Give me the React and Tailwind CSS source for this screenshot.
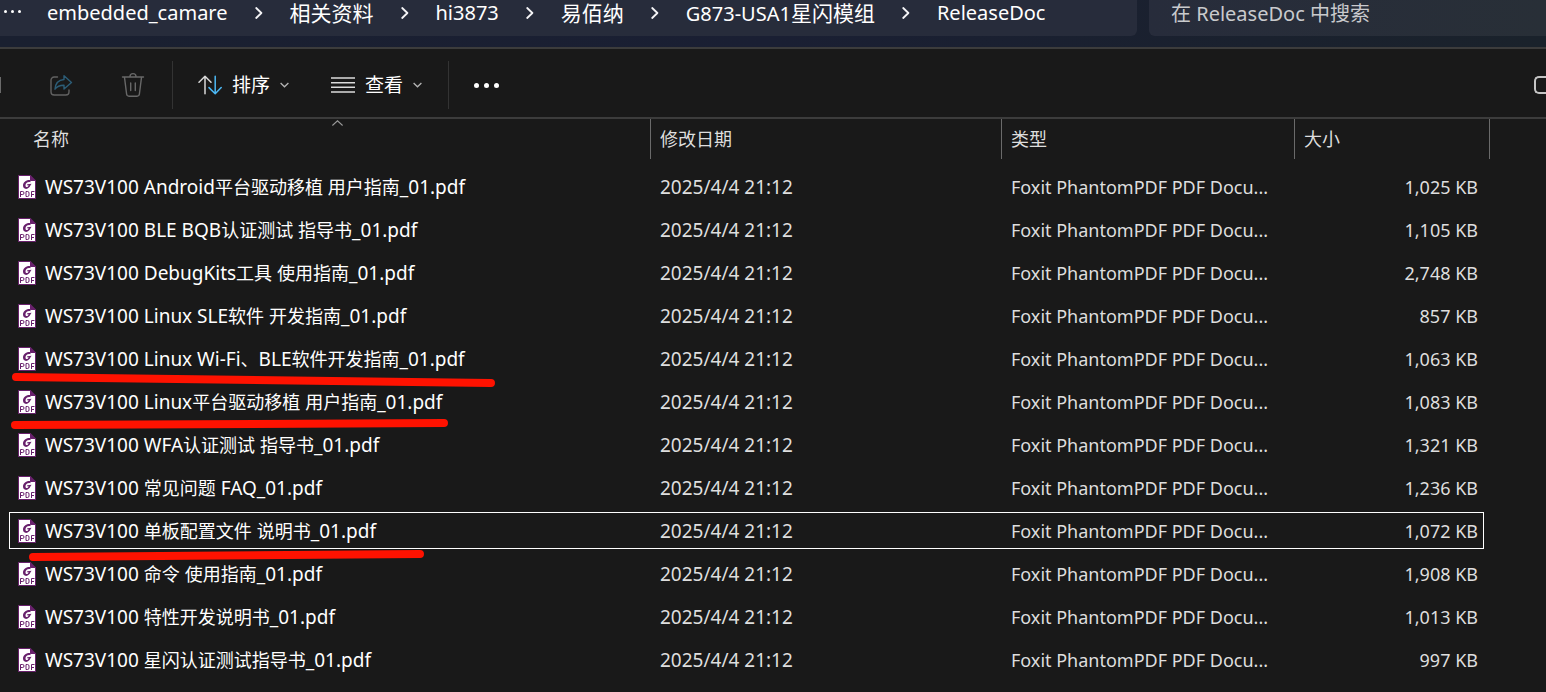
import React from 'react';

const crumbs = ['embedded_camare', '相关资料', 'hi3873', '易佰纳', 'G873-USA1星闪模组', 'ReleaseDoc'];

const files = [
  { name: 'WS73V100 Android平台驱动移植 用户指南_01.pdf', size: '1,025 KB' },
  { name: 'WS73V100 BLE BQB认证测试 指导书_01.pdf', size: '1,105 KB' },
  { name: 'WS73V100 DebugKits工具 使用指南_01.pdf', size: '2,748 KB' },
  { name: 'WS73V100 Linux SLE软件 开发指南_01.pdf', size: '857 KB' },
  { name: 'WS73V100 Linux Wi-Fi、BLE软件开发指南_01.pdf', size: '1,063 KB', mark: { x1: 16, y1: 40, x2: 491, y2: 46 } },
  { name: 'WS73V100 Linux平台驱动移植 用户指南_01.pdf', size: '1,083 KB', mark: { x1: 15, y1: 45, x2: 444, y2: 43 } },
  { name: 'WS73V100 WFA认证测试 指导书_01.pdf', size: '1,321 KB' },
  { name: 'WS73V100 常见问题 FAQ_01.pdf', size: '1,236 KB' },
  { name: 'WS73V100 单板配置文件 说明书_01.pdf', size: '1,072 KB', focused: true, mark: { x1: 33, y1: 48, x2: 420, y2: 45 } },
  { name: 'WS73V100 命令 使用指南_01.pdf', size: '1,908 KB' },
  { name: 'WS73V100 特性开发说明书_01.pdf', size: '1,013 KB' },
  { name: 'WS73V100 星闪认证测试指导书_01.pdf', size: '997 KB' },
];

function CrumbChevron() {
  return (
    <svg width="8" height="12" viewBox="0 0 8 12" fill="none" stroke="#f4f4f6" strokeWidth="1.8" strokeLinecap="round" strokeLinejoin="round" aria-hidden="true">
      <path d="M1.2 1 6.4 6 1.2 11" />
    </svg>
  );
}

function DownChevron() {
  return (
    <svg width="9" height="6" viewBox="0 0 9 6" fill="none" stroke="#b4b4b4" strokeWidth="1.3" aria-hidden="true">
      <path d="M.6 1 4.5 4.8 8.4 1" />
    </svg>
  );
}

function ShareIcon() {
  return (
    <svg width="24" height="24" viewBox="0 0 24 24" fill="none" strokeWidth="1.4" strokeLinejoin="round" strokeLinecap="round" aria-hidden="true">
      <path stroke="#626262" d="M8.5 4H5.2A3.2 3.2 0 0 0 2 7.2V18.8A3.2 3.2 0 0 0 5.2 22H16.8A3.2 3.2 0 0 0 20 18.8V17" />
      <path stroke="#2c5d77" d="M15 2.8 22.5 9.5 15 16V12.3C11 12.2 8.2 13.3 6 16.2 6.4 10.3 9.5 7 15 6.5Z" />
    </svg>
  );
}

function TrashIcon() {
  return (
    <svg width="24" height="26" viewBox="0 0 24 26" fill="none" stroke="#686868" strokeWidth="1.4" strokeLinecap="round" strokeLinejoin="round" aria-hidden="true">
      <path d="M1.5 5H22.5M9 4.6A3 3 0 0 1 15 4.6M3.5 5.4 5.6 22A2.5 2.5 0 0 0 8 24.2H16A2.5 2.5 0 0 0 18.4 22L20.5 5.4M9.7 11V18.5M14.3 11V18.5" />
    </svg>
  );
}

function SortIcon() {
  return (
    <svg width="24" height="20" viewBox="0 0 24 20" fill="none" strokeWidth="1.5" strokeLinecap="round" strokeLinejoin="round" aria-hidden="true">
      <path stroke="#d8d8d8" d="M1 7.2 7 1.2 13 7.2M7 1.5V18.8" />
      <path stroke="#4cb8f4" d="M11 12.6 17.2 18.8 23.2 12.6M17.2 1.2V18.5" />
    </svg>
  );
}

function ListIcon() {
  return (
    <svg width="24" height="16" viewBox="0 0 24 16" fill="none" stroke="#dcdcdc" strokeWidth="1.5" aria-hidden="true">
      <path d="M0 1H24M0 5.7H24M0 10.3H24M0 15H24" />
    </svg>
  );
}

function PdfIcon() {
  return (
    <svg className="shrink-0" width="18" height="24" viewBox="0 0 18 24" aria-hidden="true">
      <path d="M.5 .5H12.5V5.5H17.5V23.5H.5Z" fill="#fff" stroke="#68216c" />
      <path d="M12.5 0 18 5.5H12.5Z" fill="#68216c" />
      <path d="M12.6 5.2C8.2 4.6 5 7.4 5 10.6 5 14 8.6 15 11 12.6 12.2 11.4 12.4 10.4 13.6 8.8L9.4 9.2 8.8 10.3 10.6 10.2C10 12.6 7.4 12.8 7.5 10.2 7.6 8.2 9.4 6.6 12.4 7.2Z" fill="#68216c" />
      <path d="M2.5 22V16.5H4.7Q6 16.500 6 18T4.700 19.500H2.500M8 21.500V16.500H9.500Q11 16.500 11 18V20Q11 21.500 9.500 21.500H8M13.500 22V16.500H16.500M13.500 19.500H16" fill="none" stroke="#68216c" />
    </svg>
  );
}

function Mark({ x1, y1, x2, y2 }) {
  return (
    <svg className="pointer-events-none absolute top-0 left-0 z-10 overflow-visible" width="500" height="52" aria-hidden="true">
      <line x1={x1} y1={y1} x2={x2} y2={y2} stroke="#ff1200" strokeWidth="8" strokeLinecap="round" />
    </svg>
  );
}

function HeaderCell({ children, first }) {
  return (
    <th scope="col" className="p-0 text-left align-top font-normal">
      <div className={first ? 'h-10 border-r border-[#6a6a6a] pl-[33px] leading-10' : 'h-10 border-r border-[#6a6a6a] pl-[9px] leading-10'}>
        {children}
      </div>
    </th>
  );
}

function Mixed({ text, han }) {
  return text.split(/([\u3001\u4e00-\u9fff]+)/).map((part, i) =>
    i % 2 ? <span key={i} className={han}>{part}</span> : part
  );
}

export default function App() {
  return (
    <div className="min-h-screen overflow-hidden bg-[#191919] font-['Noto_Sans','Noto_Sans_CJK_SC',sans-serif] text-[18px] text-white">
      <header className="flex items-start gap-3 border-b-2 border-[#3c3c3c] bg-linear-to-r from-[#1a2030] via-[#1a1f33] to-[#1a222b] pb-[11px]">
        <nav aria-label="路径" className="flex h-9 flex-1 items-center rounded-br-md bg-[#272c3b] pb-[10px] text-[20px] leading-[26px] whitespace-nowrap">
          <button type="button" aria-label="更多路径" className="mb-1 ml-1 flex w-[18px] gap-1">
            <span className="size-[3px] rounded-full bg-white" />
            <span className="size-[3px] rounded-full bg-white" />
            <span className="size-[3px] rounded-full bg-white" />
          </button>
          <ol className="ml-[25px] flex items-center">
            {crumbs.map((c, i) => (
              <li key={c} className="flex items-center">
                {i > 0 && <span className="mx-[27px]"><CrumbChevron /></span>}
                <a href="#"><Mixed text={c} han="text-[21px]" /></a>
              </li>
            ))}
          </ol>
        </nav>
        <input
          type="search"
          aria-label="搜索"
          placeholder="在 ReleaseDoc 中搜索"
          className="h-9 w-[397px] shrink-0 rounded-bl-md bg-linear-to-r from-[#272c3b] to-[#282f37] pb-[10px] pl-[22px] text-[20px] leading-[26px] outline-none placeholder:text-[#c9cacd]"
        />
      </header>

      <div role="toolbar" aria-label="命令" className="flex h-[70px] items-center border-b-2 border-[#3c3c3c] pt-1 text-[19px]">
        <span className="h-4 w-px bg-[#6a6a6a]" />
        <button type="button" aria-label="共享" disabled className="ml-12"><ShareIcon /></button>
        <button type="button" aria-label="删除" disabled className="ml-12"><TrashIcon /></button>
        <span className="ml-[27px] h-12 w-px bg-[#333333]" />
        <button type="button" className="ml-[25px] flex items-center gap-[10px]">
          <SortIcon />
          <span>排序</span>
          <DownChevron />
        </button>
        <button type="button" className="ml-[42px] flex items-center gap-[10px]">
          <ListIcon />
          <span>查看</span>
          <DownChevron />
        </button>
        <span className="ml-[26px] h-12 w-px bg-[#333333]" />
        <button type="button" aria-label="查看更多" className="ml-[25px] flex gap-[5px]">
          <span className="size-[5px] rounded-full bg-white" />
          <span className="size-[5px] rounded-full bg-white" />
          <span className="size-[5px] rounded-full bg-white" />
        </button>
        <button type="button" aria-label="详细信息" className="ml-auto h-[18px] w-3 rounded-l-[5px] border-2 border-r-0 border-[#c4c4c4]" />
      </div>

      <table className="w-full table-fixed border-collapse whitespace-nowrap">
        <colgroup>
          <col className="w-[651px]" />
          <col className="w-[351px]" />
          <col className="w-[293px]" />
          <col className="w-[195px]" />
          <col />
        </colgroup>
        <thead>
          <tr className="relative h-[46px] text-[#dedede]">
            <HeaderCell first>
              名称
              <svg className="absolute top-[1px] left-[332px]" width="11" height="6" viewBox="0 0 11 6" fill="none" stroke="#9a9a9a" strokeWidth="1.1" aria-hidden="true">
                <path d="M.4 5.5 5.5 .8 10.6 5.5" />
              </svg>
            </HeaderCell>
            <HeaderCell>修改日期</HeaderCell>
            <HeaderCell>类型</HeaderCell>
            <HeaderCell>大小</HeaderCell>
            <td />
          </tr>
        </thead>
        <tbody>
          {files.map((f) => (
            <tr key={f.name} className="relative h-[43px] text-[#dedede]">
              <td className="p-0 text-white">
                <div className="flex items-center gap-[9px] pl-[18px]">
                  <PdfIcon />
                  <span className="text-[19px] leading-6"><Mixed text={f.name} han="text-[18px]" /></span>
                </div>
                {f.focused && <div className="pointer-events-none absolute inset-y-[3px] right-[62px] left-[9px] border border-white" />}
                {f.mark && <Mark {...f.mark} />}
              </td>
              <td className="p-0 pl-[9px] text-[19px] leading-6">2025/4/4 21:12</td>
              <td className="p-0 pl-[9px] leading-6">Foxit PhantomPDF PDF Docu...</td>
              <td className="p-0 pr-3 text-right leading-6">{f.size}</td>
              <td />
            </tr>
          ))}
        </tbody>
      </table>
    </div>
  );
}
